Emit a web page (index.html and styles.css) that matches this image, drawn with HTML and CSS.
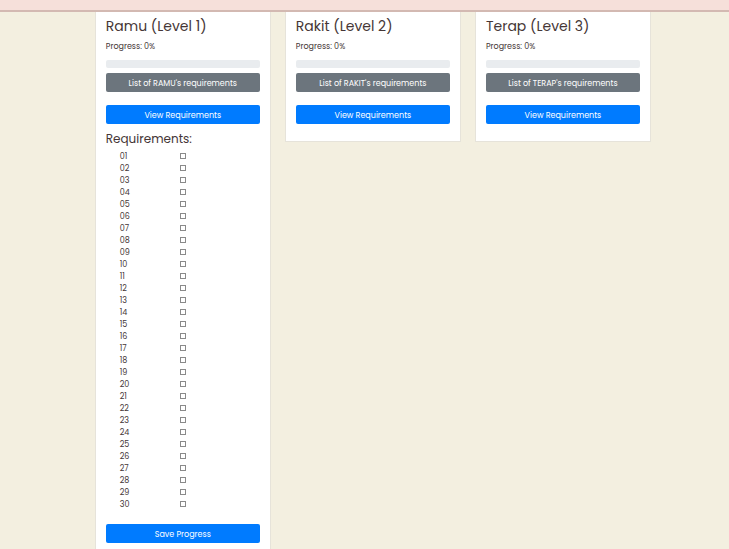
FILE: index.html
```html
<!DOCTYPE html>
<html lang="en">
<head>
<meta charset="utf-8">
<meta name="viewport" content="width=device-width, initial-scale=1">
<title>Progress</title>
<link rel="stylesheet" href="styles.css">
</head>
<body>
<header class="topbar"></header>
<main class="levels">
  <section class="card">
    <h2 class="card-title">Ramu (Level 1)</h2>
    <p class="card-text">Progress: 0%</p>
    <div class="progress" role="progressbar" aria-label="Ramu progress" aria-valuenow="0" aria-valuemin="0" aria-valuemax="100"></div>
    <button class="btn btn-secondary" type="button">List of RAMU's requirements</button>
    <button class="btn btn-primary" type="button">View Requirements</button>
    <form class="requirements">
      <h3 class="requirements-title">Requirements:</h3>
      <ul class="checklist" id="checklist"></ul>
      <button class="btn btn-primary" type="button">Save Progress</button>
    </form>
  </section>
  <section class="card">
    <h2 class="card-title">Rakit (Level 2)</h2>
    <p class="card-text">Progress: 0%</p>
    <div class="progress" role="progressbar" aria-label="Rakit progress" aria-valuenow="0" aria-valuemin="0" aria-valuemax="100"></div>
    <button class="btn btn-secondary" type="button">List of RAKIT's requirements</button>
    <button class="btn btn-primary" type="button">View Requirements</button>
  </section>
  <section class="card">
    <h2 class="card-title">Terap (Level 3)</h2>
    <p class="card-text">Progress: 0%</p>
    <div class="progress" role="progressbar" aria-label="Terap progress" aria-valuenow="0" aria-valuemin="0" aria-valuemax="100"></div>
    <button class="btn btn-secondary" type="button">List of TERAP's requirements</button>
    <button class="btn btn-primary" type="button">View Requirements</button>
  </section>
</main>
<script src="script.js"></script>
</body>
</html>
```
FILE: styles.css
```css
* {
  box-sizing: border-box;
}

body {
  margin: 0;
  background: #f3efe0;
  color: #453636;
  font-family: Poppins, Inter, "Liberation Sans", sans-serif;
  font-size: 8px;
  line-height: 12px;
}

.topbar {
  height: 12px;
  background: #f6e0da;
  border-bottom: 2px solid #d3b9b2;
}

.levels {
  display: grid;
  grid-template-columns: repeat(3, 1fr);
  gap: 14px;
  align-items: start;
  width: 76.3%;
  margin-left: 13%;
}

.card {
  padding: 4px 10px 17px;
  background: #fff;
  border: 1px solid #e6e3da;
  border-top: 0;
}

.card-title {
  margin: 0 0 5px;
  font-size: 14px;
  font-weight: 400;
  line-height: 20px;
  white-space: nowrap;
}

.card-text {
  margin: 0 0 7px;
}

.progress {
  height: 8px;
  margin-bottom: 5px;
  background: #e9ecef;
  border-radius: 2px;
}

.btn {
  display: block;
  width: 100%;
  height: 19px;
  padding: 2px 0 0;
  border: 0;
  border-radius: 2px;
  color: #fff;
  font: inherit;
  white-space: nowrap;
  cursor: pointer;
}

.btn-primary {
  background: #007bff;
}

.btn-secondary {
  margin-bottom: 13px;
  background: #6c757d;
}

.requirements-title {
  margin: 7px 0 4px;
  font-size: 12px;
  font-weight: 400;
  line-height: 15px;
}

.checklist {
  margin: 0 0 14px;
  padding: 0 14px;
  list-style: none;
}

.requirement {
  display: grid;
  grid-template-columns: 60px 1fr;
  align-items: center;
  height: 12px;
}

.requirement label {
  height: 12px;
  line-height: 14px;
}

.checkbox {
  appearance: none;
  width: 6px;
  height: 6px;
  margin: 0;
  border: 1px solid #8a8a8a;
  background: #fff;
}

.checkbox:checked {
  background: #007bff;
}
```
FILE: script.js
```js
const list = document.getElementById("checklist");

for (let i = 1; i <= 30; i++) {
  const number = String(i).padStart(2, "0");
  const item = document.createElement("li");
  item.className = "requirement";

  const label = document.createElement("label");
  label.htmlFor = "req-" + number;
  label.textContent = number;

  const box = document.createElement("input");
  box.type = "checkbox";
  box.className = "checkbox";
  box.id = "req-" + number;

  item.append(label, box);
  list.append(item);
}
```
